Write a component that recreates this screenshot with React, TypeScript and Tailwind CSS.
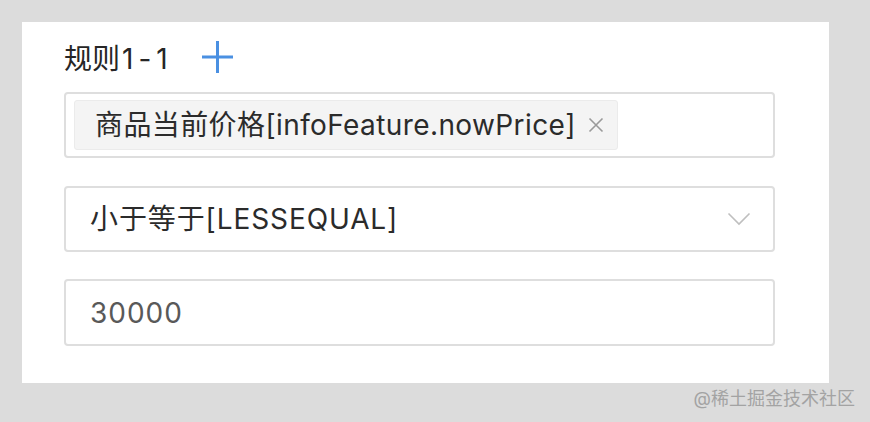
import { useState } from "react";

type Rule = {
  prefix: string;
  index: string;
  field: string;
  operator: string;
  value: string;
};

const font = "font-['Inter','Noto_Sans_CJK_SC',sans-serif]";

const Chevron = () => (
  <svg width="24" height="16" viewBox="0 0 24 16" fill="none">
    <path d="M1.5 2.5 L12 13 L22.5 2.5" stroke="#bfbfbf" strokeWidth="1.6" />
  </svg>
);

const CloseIcon = () => (
  <svg width="16" height="16" viewBox="0 0 16 16" fill="none">
    <path d="M1.5 1.5 L14.5 14.5 M14.5 1.5 L1.5 14.5" stroke="#9a9a9a" strokeWidth="1.6" />
  </svg>
);

const App = () => {
  const [rule] = useState<Rule>({
    prefix: "规则",
    index: "1-1",
    field: "商品当前价格[infoFeature.nowPrice]",
    operator: "小于等于[LESSEQUAL]",
    value: "30000",
  });

  return (
    <div className={`w-[870px] h-[422px] bg-[#dcdcdc] pt-[22px] pl-[22px] ${font}`}>
      <div className="w-[807px] h-[361px] bg-white pl-[42px] pt-[16px]">
        <div className="flex items-center h-[38px] gap-[29px]">
          <span className="text-[28px] leading-[38px] text-[#262626] pt-[3px]">
            {rule.prefix}
            <span className="tracking-[5px] ml-[2px]">{rule.index}</span>
          </span>
          <svg width="31" height="32" viewBox="0 0 31 32" fill="none">
            <path d="M15.5 0 V32 M0 16 H31" stroke="#4a90e2" strokeWidth="3" />
          </svg>
        </div>

        <div className="flex flex-col mt-[16px] w-[711px]">
          <div className="h-[66px] border-2 border-[#dedede] rounded-[4px] flex items-center pl-[8px]">
            <div className="h-[50px] bg-[#f4f4f4] border border-[#ebebeb] rounded-[3px] flex items-center pl-[20px] pr-[13px]">
              <span className="text-[28px] text-[#2b2b2b] tracking-[0.4px]">{rule.field}</span>
              <span className="ml-[12px] flex">
                <CloseIcon />
              </span>
            </div>
          </div>

          <div className="mt-[28px] h-[66px] border-2 border-[#dedede] rounded-[4px] flex items-center pl-[24px] pr-[22px]">
            <span className="text-[28px] text-[#2b2b2b] tracking-[0.9px] flex-1">{rule.operator}</span>
            <Chevron />
          </div>

          <div className="mt-[27px] h-[67px] border-2 border-[#dedede] rounded-[4px] flex items-center pl-[24px]">
            <span className="text-[28px] text-[#595959] tracking-[1px]">{rule.value}</span>
          </div>
        </div>
      </div>
      <div className="text-right pr-[15px] pt-[5px] text-[18px] leading-[22px] text-[#a3a3a3]">
        @稀土掘金技术社区
      </div>
    </div>
  );
};

export default App;
